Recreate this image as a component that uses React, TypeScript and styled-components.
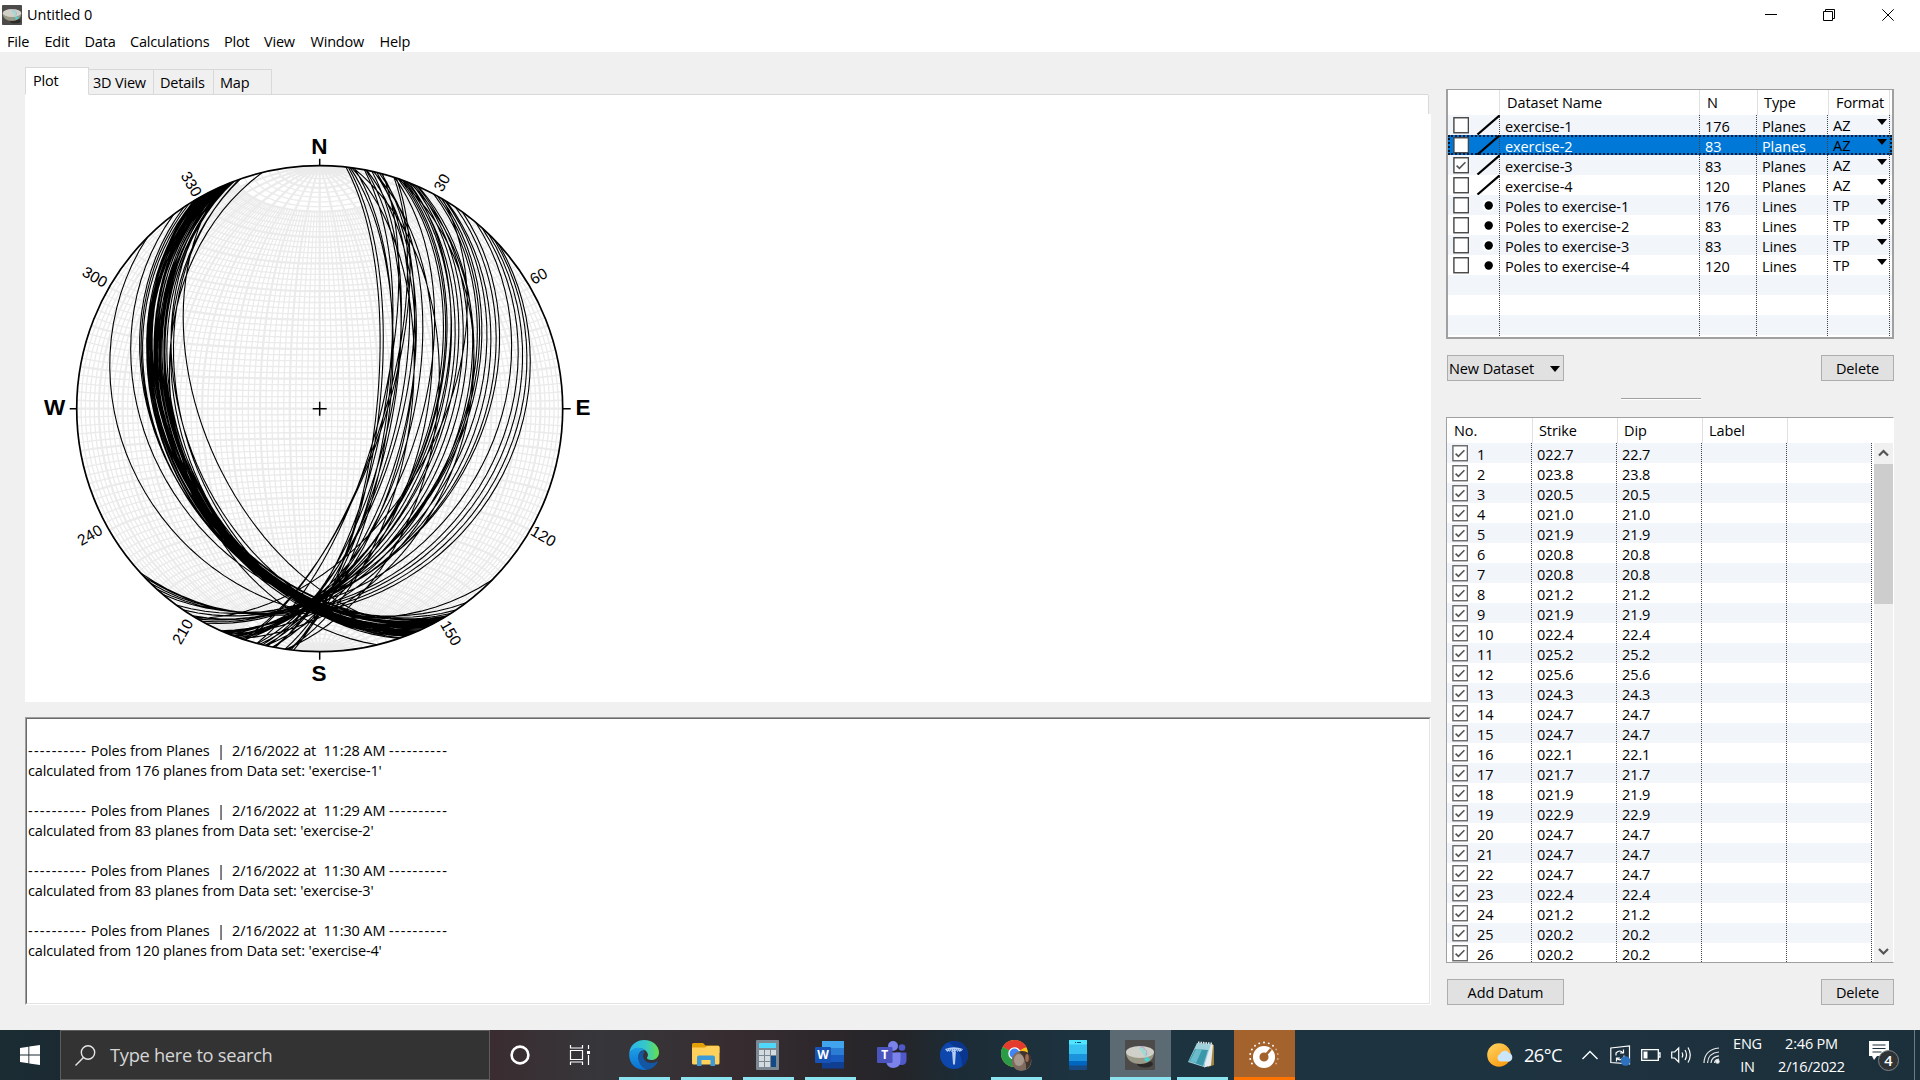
import React from 'react';
import styled, { createGlobalStyle } from 'styled-components';

const Global = createGlobalStyle`
  html, body { margin: 0; padding: 0; background: #f0f0f0; }
  body { width: 1920px; height: 1080px; overflow: hidden; }
  * { box-sizing: border-box; }
`;

const UI = `"Open Sans", "Noto Sans", sans-serif`;

const Screen = styled.div`
  width: 1920px; height: 1080px; display: flex; flex-direction: column;
  background: #f0f0f0; color: #000; font-family: ${UI}; font-size: 14.5px; letter-spacing: -0.3px;
  line-height: 20px; white-space: pre; overflow: hidden;
`;

/* ---------- title and menu ---------- */
const TitleBar = styled.header`
  height: 27px; background: #fff; display: flex; align-items: center; padding: 2px 0 0 2px; flex: none;
`;
const Title = styled.span`margin-left: 5px; flex: 1; letter-spacing: -0.1px; line-height: 24px;`;
const WinButton = styled.span`width: 58.5px; height: 24px; display: flex; align-items: center; justify-content: center;`;
const WinSpacer = styled.span`width: 3px;`;
const MenuBar = styled.nav`
  height: 25px; background: #fff; display: flex; padding: 5px 0 0 7px; flex: none; letter-spacing: -0.2px;
`;
const MenuItem = styled.span<{ $w: number }>`width: ${p => p.$w}px; line-height: 20px;`;

/* ---------- workspace ---------- */
const Workspace = styled.main`height: 978px; flex: none; display: flex; padding: 15px 26px 0 25px;`;
const LeftPane = styled.section`width: 1406px; display: flex; flex-direction: column;`;
const RightPane = styled.section`width: 448px; margin-left: 15px; display: flex; flex-direction: column; padding-top: 22px;`;

const Tabs = styled.div`height: 28px; display: flex; align-items: flex-end; flex: none;`;
const Tab = styled.div<{ $w: number; $on?: boolean; $pad: number }>`
  width: ${p => p.$w}px; height: ${p => (p.$on ? 28 : 26)}px;
  background: ${p => (p.$on ? '#fff' : '#f0f0f0')};
  border: 1px solid #d9d9d9; border-left-width: ${p => (p.$on ? 1 : 0)}px;
  border-bottom-color: ${p => (p.$on ? '#fff' : '#d9d9d9')};
  padding: ${p => (p.$on ? 3 : 3)}px 0 0 ${p => p.$pad}px;
  letter-spacing: -0.2px;
`;
const TabFill = styled.div`flex: 1; border-bottom: 1px solid #d9d9d9; height: 10px; margin-right: 3px;`;
const PlotPanel = styled.div`height: 607px; background: #fff; flex: none; display: flex; position: relative;`;
const EdgeMark = styled.i`position: absolute; top: 0; right: 0; width: 3px; height: 19px; background: #f0f0f0; border-left: 1px solid #d9d9d9;`;
const Net = styled.svg`display: block; width: 620px; height: 607px;`;

const Log = styled.div`
  margin-top: 15px; height: 288px; background: #fff; border: 1px solid; border-color: #a0a0a0 #fff #fff #a0a0a0;
`;
const LogInner = styled.div`
  height: 100%; border: 1px solid; border-color: #696969 #e3e3e3 #e3e3e3 #696969; padding: 22px 0 0 1px;
  letter-spacing: -0.13px;
`;
const LogLine = styled.div`height: 20px;`;
const Dashes = styled.span`letter-spacing: 1.25px;`;

/* ---------- tables ---------- */
const Grid1 = styled.div`
  height: 250px; border: 2px solid #a0a0a0; border-top-width: 1px; background: #fff;
  display: flex; flex-direction: column; flex: none; overflow: hidden; letter-spacing: -0.1px;
`;
const Grid2 = styled(Grid1)`height: 546px; margin-top: 17px; border-width: 1px; border-right-color: #fff;`;
const HeadRow = styled.div`height: 25px; display: flex; flex: none; padding-left: 1px;`;
const HeadCell = styled.div<{ $w: number; $pad?: number }>`
  width: ${p => p.$w}px; flex: none; border-right: 1px solid #e0e0e0; padding: 3px 0 0 ${p => p.$pad ?? 7}px;
`;
const RowBase = styled.div<{ $odd: boolean; $sel?: boolean }>`
  height: 20px; flex: none; display: flex; overflow: hidden;
  background: ${p => (p.$sel ? '#0078d7' : p.$odd ? '#f2f6fb' : '#fff')};
  color: ${p => (p.$sel ? '#fff' : '#000')};
  ${p => (p.$sel ? 'outline: 2px dotted #001a33; outline-offset: -2px;' : '')}
`;
const Cell = styled.div<{ $w: number; $pad?: number }>`
  width: ${p => p.$w}px; height: 20px; flex: none; padding: 2px 0 0 ${p => p.$pad ?? 5}px;
  display: flex; background: repeating-linear-gradient(#444 0 1px, transparent 1px 2px) right / 1px 100% no-repeat;
`;
const CheckCell = styled(Cell)`align-items: flex-start;`;
const Format = styled.span`width: 44px; color: #000; margin-top: -1px; letter-spacing: 0.1px;`;
const FormatCaret = styled.span`line-height: 6px;`;
const Num = styled.span`margin-left: 9px;`;
const Mark = styled.svg`width: 24px; height: 20px; margin: -2px 0 0 7px; flex: none;`;
const Body = styled.div`flex: 1; display: flex; overflow: hidden;`;
const Rows = styled.div`width: 425px; overflow: hidden;`;
const Scroll = styled.div`
  width: 19px; margin-left: 2px; background: #f0f0f0; display: flex; flex-direction: column; justify-content: space-between; align-items: center;
`;
const Thumb = styled.div`width: 19px; height: 140px; background: #cdcdcd; margin-bottom: auto;`;
const Arrow = styled.svg`width: 19px; height: 21px; flex: none;`;

const ButtonRow = styled.div<{ $top: number }>`display: flex; justify-content: space-between; padding-left: 1px; margin-top: ${p => p.$top}px; flex: none;`;
const Button = styled.button<{ $w: number; $left?: boolean }>`
  width: ${p => p.$w}px; height: 26px; background: #e1e1e1; border: 1px solid #adadad; padding: 1px ${p => (p.$left ? 3 : 0)}px 0 ${p => (p.$left ? 1 : 0)}px;
  font: inherit; letter-spacing: -0.1px; line-height: 22px; color: #000; display: flex; align-items: center;
  justify-content: ${p => (p.$left ? 'space-between' : 'center')};
`;
const Sash = styled.div`width: 80px; height: 2px; margin: 17px 0 0 175px; background: #a0a0a0; border-bottom: 1px solid #fff; flex: none;`;

/* ---------- taskbar ---------- */
const Taskbar = styled.footer`
  height: 50px; flex: none; display: flex; color: #fff;
  background: linear-gradient(90deg, #1b2c33 0, #1b2a32 60px, #3a2c30 490px, #36373b 600px, #372d31 730px, #2c272b 830px, #242529 900px, #1c2c36 960px, #1d3340 1080px, #1e3340 1500px, #1c303b 1920px);
`;
const Start = styled.div`width: 60px; display: flex; align-items: center; justify-content: center;`;
const Search = styled.div`
  width: 430px; background: #333; border: 1px solid #5d5d5d; display: flex; align-items: center; padding-left: 14px;
  font-size: 18.3px; color: #d6d6d6; gap: 14px; letter-spacing: -0.3px;
`;
const Slot = styled.div<{ $w: number }>`width: ${p => p.$w}px; flex: none; display: flex; align-items: center; justify-content: center;`;
const TaskButton = styled.div<{ $fill?: string; $line?: string }>`
  width: ${p => (p.$fill ? 61 : 51)}px; margin: 0 ${p => (p.$fill ? 0.5 : 5.5)}px; height: 50px; flex: none;
  display: flex; align-items: center; justify-content: center; background: ${p => p.$fill ?? 'transparent'};
  border-bottom: 3px solid ${p => p.$line ?? 'transparent'}; padding: 3px ${p => (p.$fill ? 1 : 2)}px 0 0;
`;
const Gap = styled.div`flex: 1;`;
const Weather = styled.div`display: flex; align-items: center; gap: 10px; width: 95px; padding-left: 7px; font-size: 18.3px; letter-spacing: -0.6px;`;
const Stack = styled.div<{ $w: number }>`
  width: ${p => p.$w}px; display: flex; flex-direction: column; align-items: center; font-size: 14.5px; line-height: 23px; padding-top: 2px; letter-spacing: -0.2px;
`;
const Edge = styled.div`width: 6px; border-left: 1px solid #6d7b83;`;

/* ---------- stereonet ---------- */
const R = 243;
const CX = 294.7;
const CY = 313.7;
const rad = (d: number) => (d * Math.PI) / 180;
const project = (n: number, e: number, d: number) => {
  const k = R / Math.sqrt(1 + Math.max(0, d));
  return `${(CX + e * k).toFixed(2)} ${(CY - n * k).toFixed(2)}`;
};
const greatCircle = (strike: number, dip: number, from = 0, to = 180) => {
  const s = rad(strike), q = rad(dip);
  const pts: string[] = [];
  for (let a = from; a <= to; a += 4) {
    const c = Math.cos(rad(a)), t = Math.sin(rad(a));
    pts.push(project(c * Math.cos(s) - t * Math.sin(s) * Math.cos(q), c * Math.sin(s) + t * Math.cos(s) * Math.cos(q), t * Math.sin(q)));
  }
  return 'M' + pts.join('L');
};
const smallCircle = (angle: number) => {
  const pts: string[] = [];
  for (let f = 0; f <= 180; f += 4) {
    pts.push(project(Math.cos(rad(angle)), Math.sin(rad(angle)) * Math.cos(rad(f)), Math.sin(rad(angle)) * Math.sin(rad(f))));
  }
  return 'M' + pts.join('L');
};
/* true dip of a plane from its strike and its distance from the centre along the E-W diameter */
const dipFrom = (strike: number, offset: number) => {
  const apparent = Math.PI / 2 - 2 * Math.asin(offset / (R * Math.SQRT2));
  return (Math.atan(Math.tan(apparent) / Math.abs(Math.cos(rad(strike)))) * 180) / Math.PI;
};

let fine = '';
let bold = '';
for (let a = 2; a < 180; a += 2) {
  if (a % 10) fine += smallCircle(a); else bold += smallCircle(a);
}
for (let q = 2; q <= 90; q += 2) {
  if (q % 10) fine += greatCircle(0, q, 20, 160) + greatCircle(180, q, 20, 160);
  else bold += greatCircle(0, q) + greatCircle(180, q);
}

/* [strike, offset] pairs */
const eastLimb: [number, number][] = [
  [6.2, 57], [6.8, 59.7], [8.2, 68], [7.2, 70], [7.6, 92], [8, 118], [10.6, 65], [11, 74], [11.2, 90], [12.4, 72],
  [13, 89], [13.6, 80], [14.2, 95], [14.8, 84], [12.8, 108], [15, 62], [17.8, 66], [18.4, 68], [18, 104], [18.8, 114],
  [19.4, 116], [20, 117], [20.5, 122], [21, 126], [21.6, 120], [22, 148], [22.4, 129], [23, 134], [23.6, 139],
  [19, 150], [24, 145], [28, 147], [29, 149], [30, 151], [31, 157], [31.5, 162], [30.4, 128], [34, 167], [36, 170],
  [40, 184], [42, 192], [44, 197], [46, 202], [47.5, 206],
];
const westLimb: [number, number][] = [
  [134.8, 206], [143, 182], [146, 172], [147.4, 171], [160.6, 140.5], [161, 144], [157.6, 141], [155.8, 123], [166.3, 148],
];
for (let i = 0; i < 36; i++) {
  const jitter = Math.sin(i * 12.9898) * 43758.5453;
  const f = jitter - Math.floor(jitter) - 0.5;
  const s = 148.6 + (i * 10.8) / 35;
  westLimb.push([s, 166 - (i * 16) / 35 + f * 11]);
}
const planes = [...eastLimb, ...westLimb].map(([s, o]) => greatCircle(s, dipFrom(s, o))).join('');

const azimuths: [string, number, number, number][] = [
  ['30', 441.7, 182.5, -60], ['60', 538.5, 276, -30], ['120', 543.5, 536, 30], ['150', 451, 633, 60],
  ['210', 182.5, 631.5, -60], ['240', 89.8, 535, -30], ['300', 95, 276.8, 30], ['330', 191.5, 184, 60],
];
const compass: [string, number, number][] = [['N', 319.3, 154.3], ['S', 319, 681.2], ['W', 54.7, 414.6], ['E', 583, 414.6]];

const Stereonet = () => (
  <Net viewBox="0 0 620 607">
    <circle cx={CX} cy={CY} r={R} fill="#fff" />
    <g fill="none" stroke="#ebebeb">
      <path d={fine} strokeWidth="1.3" />
      <path d={bold} strokeWidth="2.2" />
    </g>
    <path d={planes} fill="none" stroke="#000" strokeWidth="1.1" />
    <circle cx={CX} cy={CY} r={R} fill="none" stroke="#000" strokeWidth="1.7" />
    <path d={`M${CX} ${CY - 7}v14M${CX - 7} ${CY}h14M${CX} ${CY - R - 7}v7M${CX} ${CY + R}v8M${CX - R - 7} ${CY}h7M${CX + R} ${CY}h8`} stroke="#000" strokeWidth="1.5" fill="none" />
    <g fontFamily='"Liberation Sans", Arial, sans-serif' textAnchor="middle" letterSpacing="0">
      {compass.map(([t, x, y]) => (
        <text key={t} x={x - 25} y={y - 95} fontSize="22.5" fontWeight="700">{t}</text>
      ))}
      {azimuths.map(([t, x, y, r]) => (
        <text key={t} transform={`translate(${x - 25} ${y - 95}) rotate(${r})`} y="5.5" fontSize="15.5">{t}</text>
      ))}
    </g>
  </Net>
);

/* ---------- small drawings ---------- */
const BoxSvg = styled.svg`width: 16px; height: 17px; display: block; flex: none;`;
const Check = ({ on, dim }: { on?: boolean; dim?: boolean }) => (
  <BoxSvg viewBox="0 0 16 17">
    <rect x=".9" y=".75" width="14.500" height="15" fill="#fff" stroke={dim ? '#666' : '#444'} strokeWidth="1.4" />
    {on && <path d="M3.600 8.600l2.800 2.800 6-6.200" fill="none" stroke="#555" strokeWidth="1.600" />}
  </BoxSvg>
);
const Caret = () => <svg width="10" height="6" viewBox="0 0 10 6"><path d="M0 0h10L5 6z" /></svg>;

const Bowl = ({ size }: { size: number }) => (
  <svg width={size} height={size} viewBox="0 0 30 30">
    <rect width="30" height="30" rx="1" fill="#4c4b4a" />
    <ellipse cx="20" cy="24" rx="8" ry="3.500" fill="#2b2a29" />
    <path d="M1 12c0 8 6 12 14 12S29 20 29 12z" fill="#9a9886" />
    <ellipse cx="15" cy="12" rx="14" ry="6" fill="#d0cfc8" />
    <path d="M13 7l6 2 3 6-1 3z" fill="#9adcd4" />
    <path d="M15 6.500c6 2 8 5 6 9" fill="none" stroke="#b6a0cf" />
    <path d="M19 19l4-2 2 3-4 2z" fill="#45d6d4" />
  </svg>
);

const WindowsLogo = () => (
  <svg width="20" height="20" viewBox="0 0 20 20" fill="#fff"><path d="M0 3l8.400-1.300V9.500H0zM9.300 1.500L20 0v9.500H9.300zM0 10.400h8.400v7.900L0 17zM9.300 10.400H20V20L9.300 18.400z" /></svg>
);
const EdgeIcon = () => (
  <svg width="30" height="30" viewBox="0 0 30 30">
    <defs>
      <linearGradient id="e1" x1="0" x2="1"><stop offset="0" stopColor="#2ab5ee" /><stop offset=".55" stopColor="#36c8c8" /><stop offset="1" stopColor="#66e04a" /></linearGradient>
      <linearGradient id="e2" x1="0" y1="0" x2="0" y2="1"><stop offset="0" stopColor="#1ea0e6" /><stop offset="1" stopColor="#0a6fd0" /></linearGradient>
    </defs>
    <path d="M.3 13C1 5.500 7 0 15 0c9 0 15 6 15 12.500 0 5-4 7.500-7.500 7.500-3 0-4.800-1.200-4.500-2.500 1.500-1.500 1.200-4-.5-6C14 7 5 6.500.3 13z" fill="url(#e1)" />
    <path d="M.3 13C3 7.500 12 6 16.500 10.500c-5-1-7.500 3-7 7.500.6 6 5 10.500 9.500 11.500C8 32-1 24 .3 13z" fill="url(#e2)" />
    <path d="M14 11c-4 1.500-5.500 5-4.500 9 1.500 6 6 9.500 10 9.500 4-1 7-3.500 9-7 .4-.9-.3-1.200-1-.8-6 3-13 .3-13.500-5.700-.1-1.500.6-3 1.700-4z" fill="#1256a4" />
  </svg>
);
const FolderIcon = () => (
  <svg width="28" height="24" viewBox="0 0 28 24">
    <path d="M0 1.500Q0 0 1.500 0H11l2.500 2.500H26Q27.500 2.500 27.500 4v6H0z" fill="#e3a008" />
    <path d="M0 4.500h13l2-1.500h11q1.500 0 1.500 1.500V20q0 1.500-1.500 1.500H1.500Q0 21.500 0 20z" fill="#ffd15c" />
    <path d="M5 23v-8.500Q5 12.500 7 12.500h14q2 0 2 2V23h-4.500v-6h-9v6z" fill="#3c9ad8" />
  </svg>
);
const CalcIcon = () => (
  <svg width="23" height="30" viewBox="0 0 23 30">
    <rect width="23" height="30" rx="1" fill="#7b8791" /><rect x="3" y="3" width="17" height="5" fill="#4fd8fb" />
    {[0, 1, 2].map(r => [0, 1, 2].map(c => (c === 2 && r > 0 ? null : <rect key={`${r}${c}`} x={3 + c * 6} y={10 + r * 6} width="5" height="5" fill="#d3dae0" />)))}
    <rect x="15" y="16" width="5" height="11" fill="#114a86" />
  </svg>
);
const WordIcon = () => (
  <svg width="30" height="28" viewBox="0 0 30 28">
    <rect x="7" y="0" width="22" height="7" fill="#41a5ee" /><rect x="7" y="7" width="22" height="7" fill="#2b7cd3" /><rect x="7" y="14" width="22" height="7" fill="#185abd" /><rect x="7" y="21" width="22" height="6.500" fill="#103f91" />
    <rect x="0" y="6" width="16" height="16" rx="1" fill="#1753b4" />
    <text x="8" y="18" textAnchor="middle" fontSize="12" fontWeight="700" fill="#fff" fontFamily="Open Sans" letterSpacing="0">W</text>
  </svg>
);
const TeamsIcon = () => (
  <svg width="30" height="28" viewBox="0 0 30 28">
    <circle cx="25" cy="6.500" r="3.300" fill="#5059c9" /><circle cx="16" cy="5" r="5" fill="#7b83eb" />
    <path d="M19 11.500h9.500q1 0 1 1V19q0 5-5 5t-5-3z" fill="#5059c9" /><path d="M9 11.500h14.500v8q0 7-7 7.500-7-.5-7.500-7z" fill="#7b83eb" />
    <rect x="0" y="6" width="15.500" height="16" rx="1" fill="#4b53bc" />
    <text x="7.750" y="18" textAnchor="middle" fontSize="12" fontWeight="700" fill="#fff" fontFamily="Open Sans" letterSpacing="0">T</text>
  </svg>
);
const RoundT = () => (
  <svg width="28" height="28" viewBox="0 0 28 28">
    <circle cx="14" cy="14" r="14" fill="#0d47ad" /><path d="M14 0a14 14 0 0 1 14 14 14 14 0 0 1-6 11.500Q22 8 8 1.500 11 0 14 0z" fill="#0a3690" />
    <path d="M5 8q9-3.500 18 0l-2 2.500q-2.500-1-5-1l-1 13.500-1 1-1-1-1-13.500q-2.500 0-5 1z" fill="#b5cdf2" />
    <path d="M5 8.500h18M7 10.500h14" stroke="#6f9be0" strokeDasharray="1 1" />
  </svg>
);
const ChromeIcon = () => (
  <svg width="32" height="32" viewBox="0 0 32 32">
    <circle cx="14.500" cy="14.500" r="13.500" fill="#fbc116" />
    <path d="M14.500 14.500L2.800 7.750A13.500 13.500 0 0 1 26.200 7.750z" fill="#e33b2e" />
    <path d="M14.500 14.500L2.800 7.750A13.500 13.500 0 0 0 14.500 28z" fill="#2a9b47" />
    <path d="M14.500 8.500h12.200l-.5-.75L14.500 6z" fill="#e33b2e" />
    <circle cx="14.500" cy="14.500" r="6.200" fill="#fff" /><circle cx="14.500" cy="14.500" r="4.900" fill="#4285f4" />
    <circle cx="21.500" cy="22" r="10" fill="#7e6b60" /><path d="M19 12.500q9-2 12 6 1 8-5 12 1-10-7-18z" fill="#3f342e" /><ellipse cx="19" cy="21" rx="5" ry="6" fill="#a8988b" /><ellipse cx="27" cy="19" rx="1.800" ry="4" fill="#a06b55" />
  </svg>
);
const PhoneIcon = () => (
  <svg width="18" height="30" viewBox="0 0 18 30">
    <rect width="18" height="30" rx="1" fill="#174a82" /><rect width="18" height="25.500" rx="1" fill="#0067c0" /><rect width="18" height="21" fill="#1b93dd" /><rect width="18" height="14" fill="#37c2f1" /><rect width="18" height="4.500" rx="1" fill="#50e6ff" />
    <path d="M6 2.500h1M8 2.500h4" stroke="#0f4a78" />
  </svg>
);
const NotepadIcon = () => (
  <svg width="28" height="28" viewBox="0 0 28 28">
    <path d="M20 3l6 1v20l-6 2z" fill="#a3813e" /><path d="M19 3l6 .5-2 21-7 2z" fill="#e6ecef" />
    <path d="M9 2l14 1-7 23L0 21z" fill="#9fd1dc" /><path d="M7 8l13 1-5 16L1 20z" fill="#3b98ab" /><path d="M8 8l6 .5L8 22l-6-2z" fill="#6bbccb" />
    <path d="M10 1.500l14 1" stroke="#dfe8ec" strokeWidth="2" strokeDasharray="1.500 1" />
  </svg>
);
const GaugeIcon = () => (
  <svg width="30" height="28" viewBox="0 0 30 28">
    <circle cx="15" cy="16" r="7.800" fill="none" stroke="#fff" strokeWidth="6.500" />
    <path d="M15 16l7-8" stroke="#a4632c" strokeWidth="2.500" />
    {Array.from({ length: 13 }, (_, i) => {
      const a = rad(-120 + i * 20);
      return <circle key={i} cx={15 + Math.sin(a) * 14} cy={15.5 - Math.cos(a) * 14} r=".95" fill={i > 8 ? '#d3a984' : '#fff'} />;
    })}
  </svg>
);

/* ---------- data ---------- */
const menus: [string, number][] = [['File', 37.5], ['Edit', 40], ['Data', 45.5], ['Calculations', 94], ['Plot', 40], ['View', 46.5], ['Window', 69], ['Help', 40]];
const sets: [string, string, boolean][] = [
  ['exercise-1', '176', true], ['exercise-2', '83', true], ['exercise-3', '83', true], ['exercise-4', '120', true],
  ['Poles to exercise-1', '176', false], ['Poles to exercise-2', '83', false], ['Poles to exercise-3', '83', false], ['Poles to exercise-4', '120', false],
];
const strikes = ['22.7', '23.8', '20.5', '21.0', '21.9', '20.8', '20.8', '21.2', '21.9', '22.4', '25.2', '25.6', '24.3', '24.7', '24.7', '22.1', '21.7', '21.9', '22.9', '24.7', '24.7', '24.7', '22.4', '21.2', '20.2', '20.2'];
const runs: [string, string, string][] = [['11:28', '176', '1'], ['11:29', '83', '2'], ['11:30', '83', '3'], ['11:30', '120', '4']];

export default function App() {
  return (
    <Screen>
      <Global />
      <TitleBar>
        <Bowl size={20} />
        <Title>Untitled 0</Title>
        <WinButton><svg width="12" height="12" viewBox="0 0 12 12"><path d="M0 5.500h12" stroke="#000" /></svg></WinButton>
        <WinButton><svg width="12" height="12" viewBox="0 0 12 12"><path d="M.5 2.500h9v9h-9zM2.500 2V.500h9v9H10" fill="none" stroke="#000" /></svg></WinButton>
        <WinButton><svg width="12" height="12" viewBox="0 0 12 12"><path d="M.3.300l11.400 11.400M11.700.300L.3 11.700" stroke="#000" /></svg></WinButton>
        <WinSpacer />
      </TitleBar>
      <MenuBar>{menus.map(([m, w]) => <MenuItem key={m} $w={w}>{m}</MenuItem>)}</MenuBar>

      <Workspace>
        <LeftPane>
          <Tabs>
            <Tab $w={64} $pad={7} $on>Plot</Tab>
            <Tab $w={65} $pad={4}>3D View</Tab>
            <Tab $w={60} $pad={6}>Details</Tab>
            <Tab $w={58} $pad={6}>Map</Tab>
            <TabFill />
          </Tabs>
          <PlotPanel><Stereonet /><EdgeMark /></PlotPanel>
          <Log>
            <LogInner>
              {runs.map(([time, n, id], i) => (
                <React.Fragment key={id}>
                  {i > 0 && <LogLine />}
                  <LogLine><Dashes>----------</Dashes>{` Poles from Planes  |  2/16/2022 at  ${time} AM `}<Dashes>----------</Dashes></LogLine>
                  <LogLine>{`calculated from ${n} planes from Data set: 'exercise-${id}'`}</LogLine>
                </React.Fragment>
              ))}
            </LogInner>
          </Log>
        </LeftPane>

        <RightPane>
          <Grid1>
            <HeadRow>
              <HeadCell $w={51} /><HeadCell $w={200}>Dataset Name</HeadCell><HeadCell $w={58}>N</HeadCell><HeadCell $w={71} $pad={6}>Type</HeadCell><HeadCell $w={61}>Format</HeadCell>
            </HeadRow>
            {Array.from({ length: 12 }, (_, i) => {
              const s = sets[i];
              return (
                <RowBase key={i} $odd={i % 2 === 0} $sel={i === 1}>
                  <CheckCell $w={52}>
                    {s && <Check on={i === 2} />}
                    {s && (
                      <Mark viewBox="0 0 24 20">
                        {s[2] ? <path d="M1.500 19.500L23.500.500" stroke="#000" strokeWidth="2.200" /> : <><circle cx="12.700" cy="10.500" r="6" fill="#fff" /><circle cx="12.700" cy="10.500" r="4.200" /></>}
                      </Mark>
                    )}
                  </CheckCell>
                  <Cell $w={200}>{s?.[0]}</Cell>
                  <Cell $w={57}>{s?.[1]}</Cell>
                  <Cell $w={71}>{s && (s[2] ? 'Planes' : 'Lines')}</Cell>
                  <Cell $w={62}>{s && <><Format>{s[2] ? 'AZ' : 'TP'}</Format><FormatCaret><Caret /></FormatCaret></>}</Cell>
                </RowBase>
              );
            })}
          </Grid1>
          <ButtonRow $top={16}>
            <Button $w={117} $left>New Dataset<Caret /></Button>
            <Button $w={73}>Delete</Button>
          </ButtonRow>
          <Sash />
          <Grid2>
            <HeadRow>
              <HeadCell $w={85} $pad={6}>No.</HeadCell><HeadCell $w={85} $pad={6}>Strike</HeadCell><HeadCell $w={85} $pad={6}>Dip</HeadCell><HeadCell $w={85} $pad={6}>Label</HeadCell>
            </HeadRow>
            <Body>
              <Rows>
                {strikes.map((v, i) => (
                  <RowBase key={i} $odd={i % 2 === 0}>
                    <CheckCell $w={85}><Check on dim /><Num>{i + 1}</Num></CheckCell>
                    <Cell $w={85}>{'0' + v}</Cell><Cell $w={85}>{v}</Cell><Cell $w={85} /><Cell $w={85} />
                  </RowBase>
                ))}
              </Rows>
              <Scroll>
                <Arrow viewBox="0 0 19 21"><path d="M5 12.500l4.500-4.500 4.500 4.500" fill="none" stroke="#555" strokeWidth="2.200" /></Arrow>
                <Thumb />
                <Arrow viewBox="0 0 19 21"><path d="M5 8l4.500 4.500L14 8" fill="none" stroke="#555" strokeWidth="2.200" /></Arrow>
              </Scroll>
            </Body>
          </Grid2>
          <ButtonRow $top={16}>
            <Button $w={117}>Add Datum</Button>
            <Button $w={73}>Delete</Button>
          </ButtonRow>
        </RightPane>
      </Workspace>

      <Taskbar>
        <Start><WindowsLogo /></Start>
        <Search>
          <svg width="21" height="21" viewBox="0 0 21 21" fill="none" stroke="#e6e6e6" strokeWidth="1.400"><circle cx="13" cy="7.500" r="6.700" /><path d="M8.500 12.500L.5 20.500" /></svg>
          Type here to search
        </Search>
        <Slot $w={60}><svg width="20" height="20" viewBox="0 0 20 20"><circle cx="10" cy="10" r="8.400" fill="none" stroke="#fff" strokeWidth="2.600" /></svg></Slot>
        <Slot $w={60}>
          <svg width="22" height="20" viewBox="0 0 22 20" fill="none" stroke="#fff" strokeWidth="1.200"><path d="M1.500 5.500h12v9h-12zM1.500 0v3h12V0M1.500 20v-3h12v3M19.500 0v4M19.500 10v10" /><path d="M18 6h3v3h-3z" fill="#fff" stroke="none" /></svg>
        </Slot>
        <Slot $w={3.5} />
        <TaskButton $line="#8be3ef"><EdgeIcon /></TaskButton>
        <TaskButton $line="#8be3ef"><FolderIcon /></TaskButton>
        <TaskButton $line="#8be3ef"><CalcIcon /></TaskButton>
        <TaskButton $line="#8be3ef"><WordIcon /></TaskButton>
        <TaskButton><TeamsIcon /></TaskButton>
        <TaskButton><RoundT /></TaskButton>
        <TaskButton $line="#8be3ef"><ChromeIcon /></TaskButton>
        <TaskButton><PhoneIcon /></TaskButton>
        <TaskButton $fill="#5b6a73" $line="#8be3ef"><Bowl size={30} /></TaskButton>
        <TaskButton $line="#8be3ef"><NotepadIcon /></TaskButton>
        <TaskButton $fill="#a4632c" $line="#ff7300"><GaugeIcon /></TaskButton>
        <Gap />
        <Weather>
          <svg width="27" height="25" viewBox="0 0 27 25">
            <defs><linearGradient id="sun" x1="0" y1="0" x2=".7" y2="1"><stop offset="0" stopColor="#ffd866" /><stop offset="1" stopColor="#fb9a10" /></linearGradient></defs>
            <circle cx="12" cy="12" r="11.800" fill="url(#sun)" /><path d="M13 18.500a4 4 0 0 1 0-7.500 5 5 0 0 1 9-1 4.500 4.500 0 0 1 .5 8.500z" fill="#cbe6fa" />
          </svg>
          26°C
        </Weather>
        <Slot $w={30}><svg width="16" height="10" viewBox="0 0 16 10"><path d="M.5 9L8 1.500 15.500 9" fill="none" stroke="#fff" strokeWidth="1.400" /></svg></Slot>
        <Slot $w={30}>
          <svg width="21" height="21" viewBox="0 0 21 21" fill="none" stroke="#fff" strokeWidth="1.200"><path d="M.8 3L19.500.800v18L.8 17.500zM6 10.500V8q4-4 7 0M13.500 4.500V8H10M14 10.500v2q-4 4-7 1M6.500 16.500V13H10" /><circle cx="15.500" cy="16" r="4.800" fill="#2e72bd" stroke="none" /></svg>
        </Slot>
        <Slot $w={31}><svg width="20" height="12" viewBox="0 0 20 12"><path d="M.7.700h16.600v10.600H.7zM17.500 4h1.500v4h-1.500" fill="none" stroke="#fff" strokeWidth="1.300" /><path d="M2.500 2.500h4v7h-4z" fill="#fff" /></svg></Slot>
        <Slot $w={30}><svg width="21" height="18" viewBox="0 0 21 18" fill="none" stroke="#fff" strokeWidth="1.200"><path d="M.7 6h3l4-4v14l-4-4h-3zM11 6.500q1.500 2.500 0 5M14 4q3 5 0 10M17 1.500q4.500 7.500 0 15" /></svg></Slot>
        <Slot $w={30}><svg width="17" height="17" viewBox="0 0 17 17" fill="none" stroke="#e6e6e6" strokeWidth="1.200"><path d="M1 16Q1.500 2.500 16 1M4.500 16Q5 6 16 5M8 16Q8.500 9.500 16 8.800" /><path d="M11.500 16q.5-3.500 4.500-3.800" /><circle cx="14.500" cy="14.500" r="1.600" fill="#fff" /></svg></Slot>
        <Stack $w={43}><span>ENG</span><span>IN</span></Stack>
        <Stack $w={85}><span>2:46 PM</span><span>2/16/2022</span></Stack>
        <Slot $w={60}>
          <svg width="32" height="32" viewBox="0 0 32 32">
            <path d="M1 2h20v15H9l-3 4-2-4H1z" fill="#fff" /><path d="M4.500 6h13M4.500 9.500h13M4.500 13h9" stroke="#1c303b" strokeWidth="1.200" />
            <circle cx="20.500" cy="21.500" r="10" fill="#2f3336" stroke="#7c8588" />
            <text x="20.500" y="27" textAnchor="middle" fontSize="14.500" fontWeight="600" fill="#fff" fontFamily="Open Sans" letterSpacing="0">4</text>
          </svg>
        </Slot>
        <Edge />
      </Taskbar>
    </Screen>
  );
}
